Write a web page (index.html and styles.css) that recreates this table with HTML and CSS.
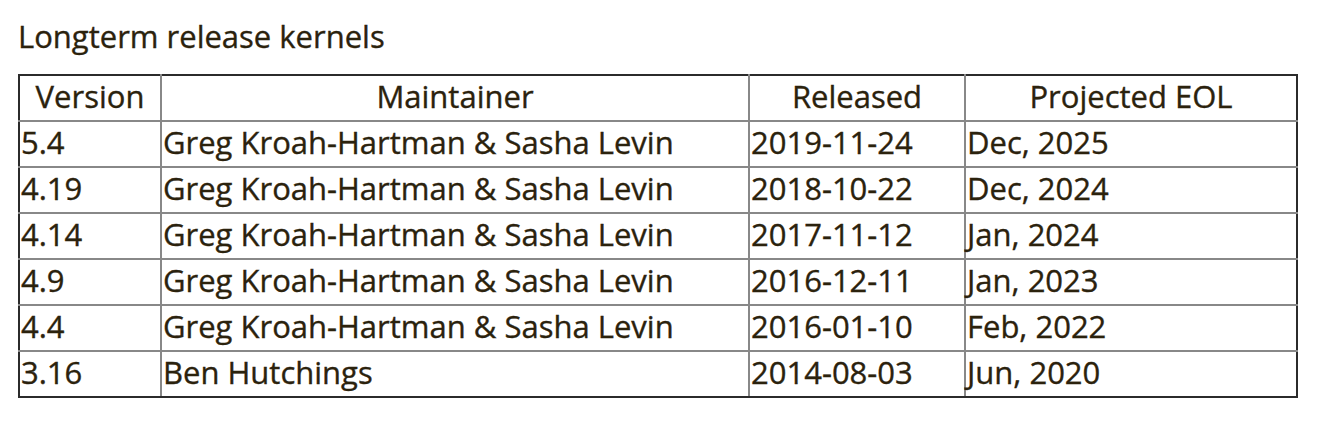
FILE: index.html
```html
<!DOCTYPE html>
<html>
<head>
<meta charset="utf-8">
<link rel="stylesheet" href="styles.css">
</head>
<body>
<div class="page">
  <h2 class="title">Longterm release kernels</h2>
  <table class="kernels">
    <thead>
      <tr>
        <th class="c-ver">Version</th>
        <th class="c-maint">Maintainer</th>
        <th class="c-rel">Released</th>
        <th class="c-eol">Projected EOL</th>
      </tr>
    </thead>
    <tbody>
      <tr><td>5.4</td><td>Greg Kroah-Hartman &amp; Sasha Levin</td><td>2019-11-24</td><td>Dec, 2025</td></tr>
      <tr><td>4.19</td><td>Greg Kroah-Hartman &amp; Sasha Levin</td><td>2018-10-22</td><td>Dec, 2024</td></tr>
      <tr><td>4.14</td><td>Greg Kroah-Hartman &amp; Sasha Levin</td><td>2017-11-12</td><td>Jan, 2024</td></tr>
      <tr><td>4.9</td><td>Greg Kroah-Hartman &amp; Sasha Levin</td><td>2016-12-11</td><td>Jan, 2023</td></tr>
      <tr><td>4.4</td><td>Greg Kroah-Hartman &amp; Sasha Levin</td><td>2016-01-10</td><td>Feb, 2022</td></tr>
      <tr><td>3.16</td><td>Ben Hutchings</td><td>2014-08-03</td><td>Jun, 2020</td></tr>
    </tbody>
  </table>
</div>
</body>
</html>
```

FILE: styles.css
```css
html, body {
  margin: 0;
  padding: 0;
  background: #ffffff;
}
.page {
  padding: 12px 18px 0 18px;
  font-family: "Open Sans", "Noto Sans", sans-serif;
  color: #2b220d;
  -webkit-text-stroke: 0.35px #2b220d;
}
.title {
  margin: 0 0 14px 0;
  font-size: 31px;
  font-weight: 400;
  line-height: 48px;
}
.kernels {
  width: 1280px;
  border-collapse: collapse;
  table-layout: fixed;
  font-size: 31px;
}
.kernels th,
.kernels td {
  border: 2px solid #888888;
  padding: 0 1px 3px 1px;
  height: 41px;
  line-height: 41px;
  font-weight: 400;
  text-align: left;
  white-space: nowrap;
}
.kernels th {
  text-align: center;
}
.kernels tr > :first-child { border-left-color: #2b2b2b; }
.kernels tr > :last-child { border-right-color: #2b2b2b; }
.kernels thead th { border-top-color: #2b2b2b; }
.kernels tbody tr:last-child > td { border-bottom-color: #2b2b2b; }
.c-ver { width: 138px; }
.c-maint { width: 584px; }
.c-rel { width: 212px; }
.c-eol { width: auto; }
```
